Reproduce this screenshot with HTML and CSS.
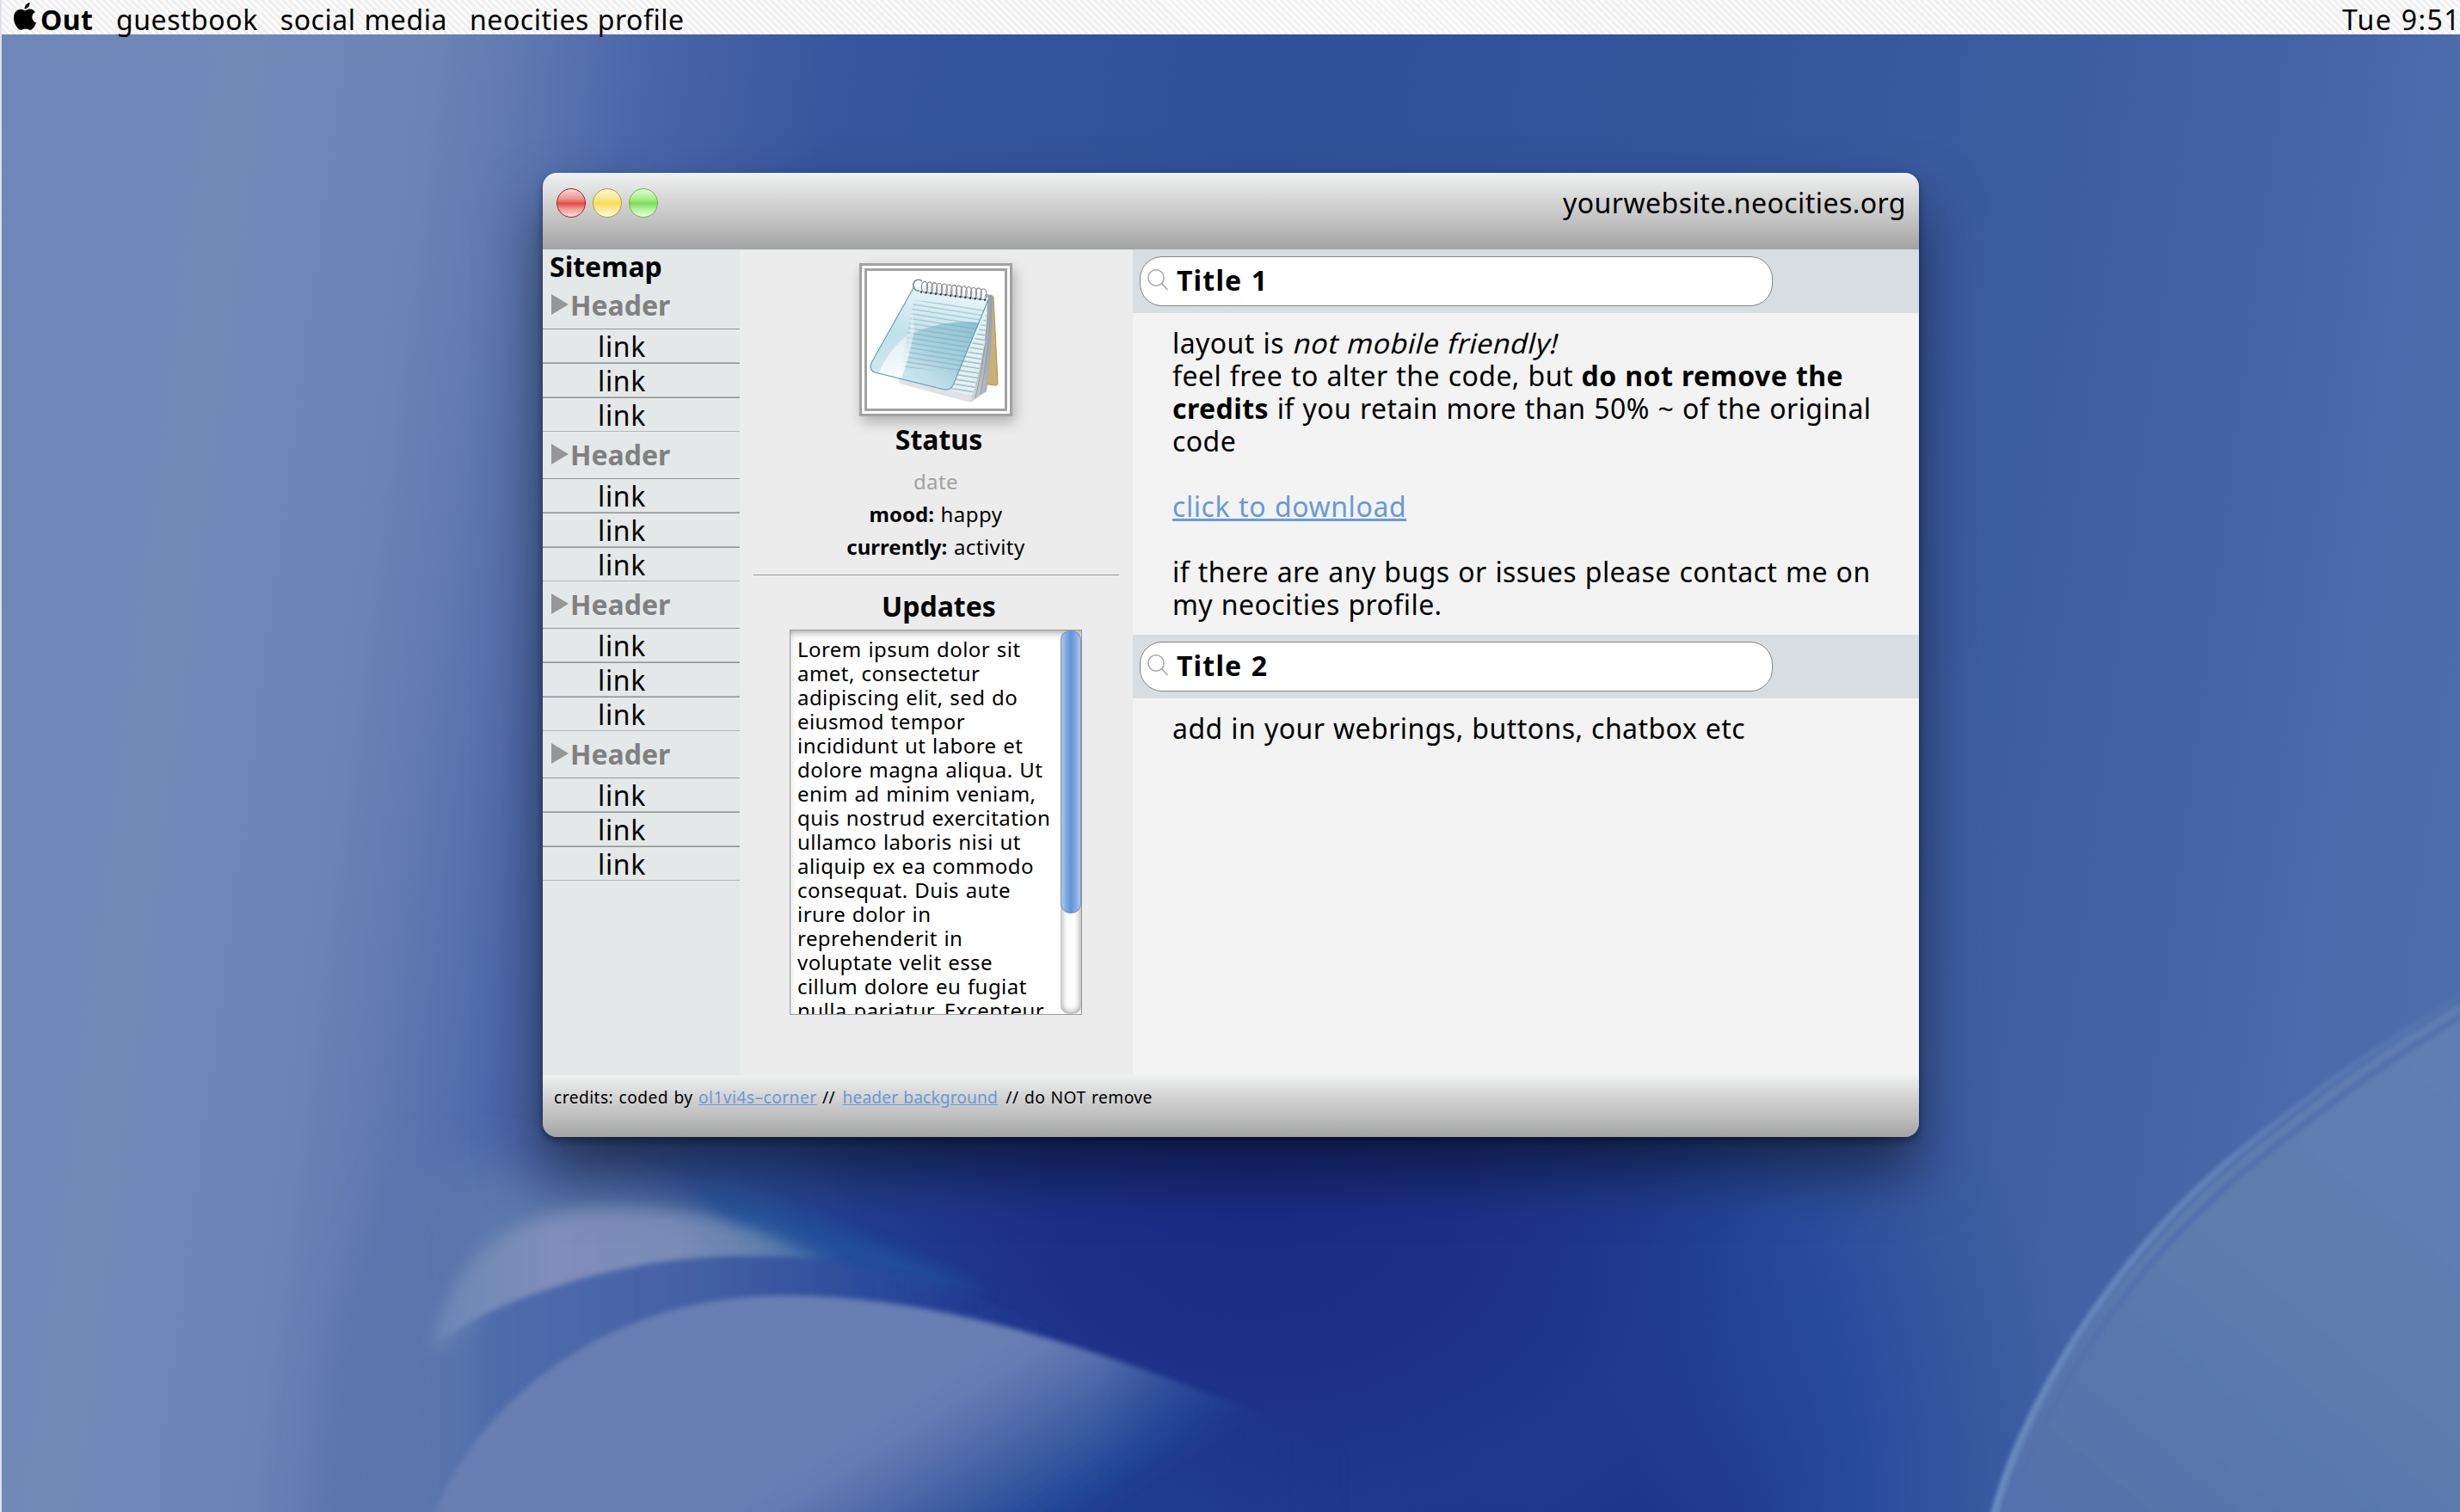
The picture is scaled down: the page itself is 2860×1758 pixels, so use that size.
FILE: index.html
```html
<!DOCTYPE html>
<html lang="en">
<head>
<meta charset="utf-8">
<title>yourwebsite.neocities.org</title>
<link rel="stylesheet" href="styles.css">
</head>
<body>
<svg class="wallpaper" viewBox="0 0 1568 964" preserveAspectRatio="none" aria-hidden="true">
  <defs>
    <linearGradient id="sky" x1="0" y1="0" x2="1600" y2="208" gradientUnits="userSpaceOnUse">
      <stop offset="0" stop-color="#6d87b8"/>
      <stop offset=".1" stop-color="#718ab8"/>
      <stop offset=".17" stop-color="#6c84b5"/>
      <stop offset=".205" stop-color="#5f7ab1"/>
      <stop offset=".25" stop-color="#4c68a9"/>
      <stop offset=".33" stop-color="#37569f"/>
      <stop offset=".5" stop-color="#30509a"/>
      <stop offset=".68" stop-color="#34549c"/>
      <stop offset=".86" stop-color="#4060a2"/>
      <stop offset="1" stop-color="#4e6eab"/>
    </linearGradient>
    <radialGradient id="deep" cx="0" cy="0" r="1" gradientUnits="userSpaceOnUse" gradientTransform="translate(920 950) rotate(-105) scale(420 410)">
      <stop offset="0" stop-color="#1a2c85"/>
      <stop offset=".3" stop-color="#1b2e87"/>
      <stop offset=".62" stop-color="#20429a" stop-opacity=".75"/>
      <stop offset="1" stop-color="#2b4c9a" stop-opacity="0"/>
    </radialGradient>
    <radialGradient id="haze" cx="0" cy="0" r="1" gradientUnits="userSpaceOnUse" gradientTransform="translate(800 770) scale(420 300)">
      <stop offset="0" stop-color="#1a2b84"/>
      <stop offset=".3" stop-color="#1c2f86"/>
      <stop offset=".6" stop-color="#1f3a8c" stop-opacity=".85"/>
      <stop offset=".85" stop-color="#27489a" stop-opacity=".3"/>
      <stop offset="1" stop-color="#2a4c9c" stop-opacity="0"/>
    </radialGradient>
    <linearGradient id="coneFill" x1="500" y1="941" x2="568" y2="1051" gradientUnits="userSpaceOnUse">
      <stop offset="0" stop-color="#687fb4"/>
      <stop offset=".15" stop-color="#627ab2"/>
      <stop offset=".4" stop-color="#4d69a8"/>
      <stop offset=".65" stop-color="#34559e"/>
      <stop offset=".85" stop-color="#224596"/>
      <stop offset="1" stop-color="#203a90" stop-opacity=".6"/>
    </linearGradient>
    <linearGradient id="coneFade" x1="700" y1="0" x2="860" y2="0" gradientUnits="userSpaceOnUse">
      <stop offset="0" stop-color="#fff"/>
      <stop offset="1" stop-color="#000"/>
    </linearGradient>
    <mask id="coneMask" maskUnits="userSpaceOnUse" x="0" y="700" width="1568" height="300">
      <rect y="700" width="1568" height="300" fill="url(#coneFade)"/>
    </mask>
    <linearGradient id="bandFill" x1="270" y1="0" x2="680" y2="0" gradientUnits="userSpaceOnUse">
      <stop offset="0" stop-color="#5874ad" stop-opacity="0"/>
      <stop offset=".1" stop-color="#506daa"/>
      <stop offset=".42" stop-color="#4461a5"/>
      <stop offset=".7" stop-color="#2b4a9a"/>
      <stop offset="1" stop-color="#1d3690" stop-opacity="0"/>
    </linearGradient>
    <linearGradient id="crescentFill" x1="275" y1="0" x2="540" y2="0" gradientUnits="userSpaceOnUse">
      <stop offset="0" stop-color="#6a88b6"/>
      <stop offset=".3" stop-color="#808eba"/>
      <stop offset=".6" stop-color="#788cb6"/>
      <stop offset=".8" stop-color="#5f80ac"/>
      <stop offset="1" stop-color="#345a9f"/>
    </linearGradient>
    <linearGradient id="sweepFill" x1="1568" y1="640" x2="1300" y2="964" gradientUnits="userSpaceOnUse">
      <stop offset="0" stop-color="#5f7eb2"/>
      <stop offset=".5" stop-color="#5d7dae"/>
      <stop offset="1" stop-color="#5371ab"/>
    </linearGradient>
    <linearGradient id="rim" x1="1270" y1="964" x2="1568" y2="640" gradientUnits="userSpaceOnUse">
      <stop offset="0" stop-color="#688bc0"/>
      <stop offset=".6" stop-color="#5f80b8"/>
      <stop offset="1" stop-color="#5677b0" stop-opacity=".4"/>
    </linearGradient>
    <filter id="b1" x="-20%" y="-20%" width="140%" height="140%"><feGaussianBlur stdDeviation="1.2"/></filter>
    <filter id="b2" x="-20%" y="-20%" width="140%" height="140%"><feGaussianBlur stdDeviation="1.800"/></filter>
    <filter id="b4" x="-30%" y="-30%" width="160%" height="160%"><feGaussianBlur stdDeviation="5"/></filter>
    <filter id="b12" x="-50%" y="-50%" width="200%" height="200%"><feGaussianBlur stdDeviation="14"/></filter>
  </defs>
  <rect width="1568" height="964" fill="url(#sky)"/>
  <rect width="1568" height="964" fill="url(#deep)"/>
  <rect width="1568" height="964" fill="url(#haze)"/>
  <path filter="url(#b12)" fill="#5a76ad" d="M215 850 L260 740 L330 740 L370 830 L330 1000 H200Z"/>
  <path filter="url(#b12)" fill="#6280ac" opacity=".6" d="M300 810 C310 745 380 735 470 775 L500 800Z"/>
  <path filter="url(#b4)" fill="#24529c" opacity=".75" d="M440 755 Q540 780 632 826 Q560 815 480 800Z"/>
  <path filter="url(#b4)" fill="url(#crescentFill)" d="M276 862 C284 812 315 776 375 770 C440 766 500 788 538 808 C450 800 360 820 276 862Z"/>
  <path filter="url(#b2)" fill="url(#bandFill)" d="M270 863 C310 828 400 801 470 801 C540 801 590 812 680 850 L700 875 C600 850 480 832 420 852 C350 880 300 930 276 1000Z"/>
  <path filter="url(#b2)" mask="url(#coneMask)" fill="url(#coneFill)" d="M274 972 C300 900 380 826 500 826 C600 826 700 860 810 904 L960 972Z"/>
  <path filter="url(#b1)" fill="url(#sweepFill)" d="M1270 970 C1287 905 1347 803 1434 734 S1542 657 1580 632 V970Z"/>
  <path filter="url(#b1)" fill="none" stroke="#5271ac" stroke-width="4" d="M1280 970 C1295 905 1354 807 1440 739 S1548 662 1580 640"/>
  <path filter="url(#b1)" fill="none" stroke="url(#rim)" stroke-width="5" d="M1270 970 C1285 905 1345 800 1432 731 S1540 655 1580 629"/>
</svg>

<div class="desktop">
  <nav class="menubar">
    <svg class="apple" viewBox="0 0 26 32" aria-hidden="true">
      <path d="M18.6 0C18.9 3.600 16 7.400 12.600 7.500C12.200 4 15.300.5 18.600 0ZM13 9.300C14.200 9.300 16 7.600 18.900 7.600C21.400 7.600 23.600 8.900 24.900 10.900C19.500 14 20.400 21.200 26 23.400C25.200 25.900 22.200 31.800 18.900 31.800C16.900 31.800 16.100 30.600 13.600 30.600C11.100 30.600 10.200 31.800 8.300 31.800C4.600 31.800 0 24.500 0 18C0 11.500 4 7.800 7.900 7.800C10.300 7.800 11.900 9.300 13 9.300Z"/>
    </svg>
    <b class="menu-out">Out</b>
    <span class="menu-item">guestbook</span>
    <span class="menu-item">social media</span>
    <span class="menu-item">neocities profile</span>
    <span class="clock">Tue 9:51</span>
  </nav>

  <main class="window">
    <header class="titlebar">
      <div class="lights">
        <i class="light red"></i>
        <i class="light yellow"></i>
        <i class="light green"></i>
      </div>
      <span class="url">yourwebsite.neocities.org</span>
    </header>

    <div class="columns">
      <aside class="sitemap">
        <h1 class="sitemap-title">Sitemap</h1>
        <h2 class="group"><i class="arrow"></i>Header</h2>
        <div class="link">link</div><div class="link">link</div><div class="link">link</div>
        <h2 class="group"><i class="arrow"></i>Header</h2>
        <div class="link">link</div><div class="link">link</div><div class="link">link</div>
        <h2 class="group"><i class="arrow"></i>Header</h2>
        <div class="link">link</div><div class="link">link</div><div class="link">link</div>
        <h2 class="group"><i class="arrow"></i>Header</h2>
        <div class="link">link</div><div class="link">link</div><div class="link">link</div>
      </aside>

      <section class="status">
        <div class="avatar">
          <svg viewBox="0 0 160 160" aria-hidden="true">
            <defs>
              <linearGradient id="cover" x1=".6" y1="0" x2=".35" y2="1">
                <stop offset="0" stop-color="#e9f6fa"/>
                <stop offset=".5" stop-color="#c3e1ea"/>
                <stop offset="1" stop-color="#cfe9f1"/>
              </linearGradient>
              <linearGradient id="shine" x1="1" y1="0" x2="0" y2="1">
                <stop offset="0" stop-color="#8fc2d2"/>
                <stop offset=".5" stop-color="#a9d0dd"/>
                <stop offset="1" stop-color="#d3eaf1" stop-opacity=".5"/>
              </linearGradient>
              <linearGradient id="glow" x1="0" y1="0" x2="0" y2="1">
                <stop offset="0" stop-color="#fff" stop-opacity=".1"/>
                <stop offset="1" stop-color="#fff" stop-opacity=".85"/>
              </linearGradient>
              <linearGradient id="edge" x1="0" y1="0" x2="1" y2="0">
                <stop offset="0" stop-color="#d3d8dc"/>
                <stop offset="1" stop-color="#9aa3aa"/>
              </linearGradient>
              <pattern id="rules" width="20" height="5.600" patternUnits="userSpaceOnUse" patternTransform="rotate(9)">
                <path d="M0 2H20" stroke="#6fa3b4" stroke-width="1"/>
              </pattern>
            </defs>
            <path fill="#c9b075" stroke="#a98f55" d="M143 28 L147 30 L152 130 Q152 134 148 133 L136 131Z"/>
            <path fill="url(#edge)" d="M137 27 L146 28 Q146 90 139 140 L120 153Z"/>
            <path fill="none" stroke="#8c959c" stroke-width=".8" d="M141 29 Q140 90 126 148 M144 29 Q143 90 132 143"/>
            <path fill="#e0e2e6" d="M36 124 L98 136 L138 80 L120 153 L38 131Z"/>
            <path fill="#e6f0f4" d="M140 30 Q140 90 122 146 L96 138Z"/>
            <path fill="url(#rules)" d="M139 50 Q137 100 122 146 L96 138Z"/>
            <path fill="url(#cover)" d="M55 18 L142 31 L100 133 Q96 139 90 138 L9 118 Q2 115 5 107Z"/>
            <path fill="url(#shine)" d="M46 76 Q85 56 130 60 L100 133 Q96 139 90 138 L38 125Z"/>
            <path fill="url(#rules)" opacity=".7" d="M54 34 L137 42 L106 118 L40 112Z"/>
            <path fill="url(#glow)" d="M52 34 L55 70 Q49 100 40 125 L14 118 Q26 90 50 72Z"/>
            <path fill="none" stroke="#5b9db2" stroke-width="1.100" d="M55 18 L5 107 Q2 115 9 118 L90 138 Q96 139 100 133 L142 31"/>
            <g fill="none" stroke="#8a8c90" stroke-width="1.100">
              <ellipse cx="67" cy="18.700" rx="3.600" ry="6.500"/><ellipse cx="72.700" cy="19.400" rx="3.600" ry="6.500"/><ellipse cx="78.400" cy="20.100" rx="3.600" ry="6.500"/><ellipse cx="84.100" cy="20.800" rx="3.600" ry="6.500"/><ellipse cx="89.800" cy="21.500" rx="3.600" ry="6.500"/><ellipse cx="95.500" cy="22.200" rx="3.600" ry="6.500"/><ellipse cx="101.200" cy="22.900" rx="3.600" ry="6.500"/><ellipse cx="106.900" cy="23.600" rx="3.600" ry="6.500"/><ellipse cx="112.600" cy="24.300" rx="3.600" ry="6.500"/><ellipse cx="118.300" cy="25" rx="3.600" ry="6.500"/><ellipse cx="124" cy="25.700" rx="3.600" ry="6.500"/><ellipse cx="129.700" cy="26.400" rx="3.600" ry="6.500"/><ellipse cx="135.400" cy="27.200" rx="3.600" ry="6.500"/>
            </g>
            <path fill="none" stroke="#77797d" stroke-width="1.300" d="M61 23 A6 6.500 0 1 1 64 12"/>
            <path fill="none" stroke="#3d4043" stroke-width="2.600" stroke-linecap="round" stroke-dasharray="0 5.750" d="M63 24.500 L139 34"/>
          </svg>
        </div>
        <h2 class="heading">Status</h2>
        <p class="date">date</p>
        <p class="fact"><b>mood:</b> happy</p>
        <p class="fact"><b>currently:</b> activity</p>
        <hr class="rule">
        <h2 class="heading">Updates</h2>
        <div class="updates">
          <p class="updates-text">Lorem ipsum dolor sit<br>amet, consectetur<br>adipiscing elit, sed do<br>eiusmod tempor<br>incididunt ut labore et<br>dolore magna aliqua. Ut<br>enim ad minim veniam,<br>quis nostrud exercitation<br>ullamco laboris nisi ut<br>aliquip ex ea commodo<br>consequat. Duis aute<br>irure dolor in<br>reprehenderit in<br>voluptate velit esse<br>cillum dolore eu fugiat<br>nulla pariatur. Excepteur</p>
          <div class="track"><div class="thumb"></div></div>
        </div>
      </section>

      <section class="content">
        <div class="strip">
          <h2 class="pill"><svg class="lens" viewBox="0 0 24 25" aria-hidden="true"><circle cx="10" cy="10" r="9.200"/><path d="M16.500 16.500 L23.500 24"/></svg>Title 1</h2>
        </div>
        <div class="copy first">
          layout is <i class="slant">not mobile friendly!</i><br>
          feel free to alter the code, but <b>do not remove the</b><br>
          <b>credits</b> if you retain more than 50% ~ of the original<br>
          code<br><br>
          <a class="anchor">click to download</a><br><br>
          if there are any bugs or issues please contact me on<br>
          my neocities profile.
        </div>
        <div class="strip">
          <h2 class="pill"><svg class="lens" viewBox="0 0 24 25" aria-hidden="true"><circle cx="10" cy="10" r="9.200"/><path d="M16.500 16.500 L23.500 24"/></svg>Title 2</h2>
        </div>
        <div class="copy">add in your webrings, buttons, chatbox etc</div>
      </section>
    </div>

    <footer class="credits">credits: coded by <a class="anchor">ol1vi4s–corner</a> // <a class="anchor narrow">header background</a> // do NOT remove</footer>
  </main>
</div>
</body>
</html>
```
FILE: styles.css
```css
* { box-sizing: border-box; }

body {
  margin: 0;
  width: 2860px;
  height: 1758px;
  overflow: hidden;
  background: #2b4890;
  color: #000;
  font: 32px/38px "Noto Sans", "Open Sans", sans-serif;
  letter-spacing: .014em;
  word-spacing: .03em;
  white-space: nowrap;
}

h1, h2, p { margin: 0; font-size: inherit; }

b, h1, h2 { letter-spacing: 0; }

.wallpaper {
  position: absolute;
  inset: 0;
  width: 2860px;
  height: 1758px;
}

.desktop {
  position: relative;
  height: 1758px;
  border-left: 2px solid #dfe1ea;
}

.menubar {
  display: flex;
  height: 40px;
  padding: 4px 0 0 14px;
  background: repeating-linear-gradient(45deg, #fbfbfb 0 3px, #f0f0f0 3px 5.660px);
}

.apple { width: 26px; height: 32px; margin: -1px 5px 0 0; }
.menu-out { width: 88px; letter-spacing: .015em; }
.menu-item { margin-right: 26px; letter-spacing: .017em; }
.clock { margin: 0 -1px 0 auto; letter-spacing: .044em; }

.window {
  display: flex;
  flex-direction: column;
  width: 1600px;
  height: 1121px;
  margin: 161px 0 0 629px;
  border-radius: 16px;
  overflow: hidden;
  box-shadow: 0 40px 70px rgba(0, 0, 0, .5), 0 4px 8px rgba(0, 0, 0, .4);
}

.titlebar {
  display: flex;
  justify-content: space-between;
  height: 89px;
  padding: 16px 15px 0 16px;
  background: linear-gradient(#eff2f2, #d6d6d6 35%, #bcbcbc 70%, #a2a4a3);
}

.lights { display: flex; gap: 8px; padding-top: 2px; }

.light {
  width: 34px;
  height: 34px;
  border: 1px solid;
  border-radius: 50%;
}

.red { border-color: #8f2626; background: linear-gradient(#f9dada, #ee9490 35%, #e74d45 52%, #f29c98 72%, #fbdede); }
.yellow { border-color: #b39a3a; background: linear-gradient(#fdf8d8, #f8e88a 35%, #f5dd58 52%, #f9ea9a 72%, #fefbe4); }
.green { border-color: #77b04c; background: linear-gradient(#e4fbd8, #a8ee8c 35%, #7bdd54 52%, #b2f399 72%, #e9fde0); }

.columns { display: flex; height: 960px; }

.sitemap { width: 229px; background: #e4e8e9; }
.sitemap-title { height: 38px; padding: 1px 0 0 8px; }

.group {
  display: flex;
  height: 54px;
  padding: 8px 0 0 10px;
  color: #808080;
}

.arrow {
  width: 20px;
  height: 24px;
  margin: 6px 2px 0 0;
  background: #969696;
  clip-path: polygon(0 0, 100% 50%, 0 100%);
}

.link {
  height: 40px;
  padding: 1px 0 0 64px;
  border-top: 1px solid #929596;
  border-bottom: 1px solid #b3b7b8;
  letter-spacing: .02em;
}

.status {
  display: flex;
  flex-direction: column;
  align-items: center;
  width: 457px;
  padding: 16px 1px 0 0;
  background: #ececec;
}

.avatar {
  width: 178px;
  height: 178px;
  border: 9px double #a2a2a2;
  background: #fff;
  box-shadow: 3px 7px 14px rgba(0, 0, 0, .25);
}

.avatar svg { display: block; width: 160px; height: 160px; }

.heading { padding: 8px 0 0 7px; }
.date, .fact { font-size: 24px; line-height: 38px; }
.date { margin-top: 11px; color: #a2a2a2; }

.rule {
  width: 425px;
  height: 1px;
  margin: 13px 0 9px;
  border: 0;
  background: #999;
}

.updates {
  display: flex;
  justify-content: space-between;
  width: 340px;
  height: 448px;
  margin-top: 8px;
  border: 1px solid #9c9c9c;
  background: #fff;
  box-shadow: inset 0 5px 10px -3px rgba(0, 0, 0, .4);
  overflow: hidden;
}

.updates-text { padding: 8px 0 0 8px; font-size: 24px; line-height: 28px; }

.track {
  width: 24px;
  height: 446px;
  border-radius: 10px;
  background: #fff;
  box-shadow: inset 0 0 8px rgba(0, 0, 0, .5);
}

.thumb {
  height: 329px;
  border: 1px solid #7a8fb0;
  border-radius: 11px;
  background: linear-gradient(90deg, #acc8ee, #86aee3 22%, #5f94d6 50%, #86aee3 78%, #acc8ee);
}

.content { width: 914px; background: #f3f3f3; }
.strip { height: 74px; padding: 8px; background: #d8dde1; }

.pill {
  display: flex;
  align-items: center;
  width: 736px;
  height: 58px;
  padding: 0 0 3px 8px;
  border: 1px solid #858585;
  border-radius: 26px;
  background: #fff;
  letter-spacing: .036em;
}

.lens { width: 24px; height: 25px; margin-right: 10px; fill: none; stroke: #a6a6a6; stroke-width: 1.500; }

.copy { padding: 16px 0 0 46px; letter-spacing: .0135em; }
.copy b { letter-spacing: .013em; }
.copy.first { height: 374px; }
.slant { display: inline-block; font-style: normal; letter-spacing: .018em; transform: translateX(2px) skewX(-14deg); }
.anchor { color: #6899da; text-decoration: underline; }
.copy .anchor { letter-spacing: .018em; }

.credits {
  height: 72px;
  padding: 7px 0 0 13px;
  background: linear-gradient(#eff1f1, #d4d4d4 35%, #bcbcbc 70%, #a2a4a3);
  font-size: 19.200px;
}

.credits .narrow { margin: 0 3px 0 2px; letter-spacing: .006em; }
```
